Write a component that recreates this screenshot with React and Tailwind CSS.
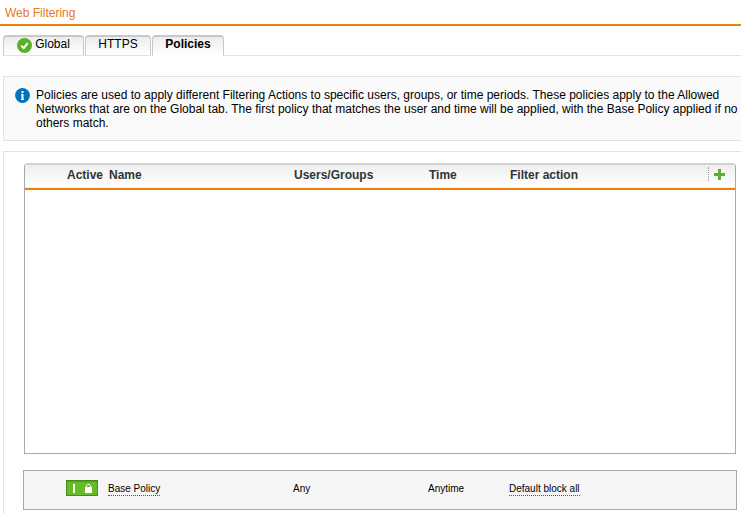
const TABS = [
  { id: 'global', label: 'Global', width: 'w-[81px]', enabled: true },
  { id: 'https', label: 'HTTPS', width: 'w-[66px]' },
  { id: 'policies', label: 'Policies', width: 'w-[72px]', active: true },
];

function CheckIcon() {
  return (
    <svg width="15" height="15" viewBox="0 0 14 14" aria-hidden="true">
      <circle cx="7" cy="7" r="7" fill="#5cb02c" />
      <path d="M4 7.2 6.3 9.4 10 4.8" fill="none" stroke="#fff" strokeWidth="1.8" />
    </svg>
  );
}

function InfoIcon() {
  return (
    <svg className="shrink-0" width="15" height="15" viewBox="0 0 15 15" aria-hidden="true">
      <circle cx="7.5" cy="7.5" r="7.4" fill="#0473bd" />
      <path d="M6.5 3h2v2h-2zM6 6h2.5v5H9v1H6v-1h.5V7H6z" fill="#fff" />
    </svg>
  );
}

function PlusIcon() {
  return (
    <svg width="11" height="11" viewBox="0 0 11 11" aria-hidden="true">
      <path d="M4 0h3v4h4v3H7v4H4V7H0V4h4z" fill="#5cb02c" />
    </svg>
  );
}

function LockedToggle() {
  return (
    <button type="button" aria-label="Base Policy active, locked" className="block h-4 w-8 border border-[#4a8a1c] bg-[#66bb29]">
      <svg width="30" height="14" viewBox="0 0 30 14" aria-hidden="true">
        <path d="M0 .5h30" stroke="#54a01e" />
        <path d="M6 3h2v9H6z" fill="#fff" />
        <path d="M18 6h7v6h-7z" fill="#fff" />
        <path d="M19.5 6.5V4.5l1-1h2l1 1v2" fill="none" stroke="#fff" />
      </svg>
    </button>
  );
}

function Tab({ tab }) {
  return (
    <button
      type="button"
      role="tab"
      aria-selected={!!tab.active}
      className={`flex h-[21px] items-center justify-center gap-[3px] rounded-t-[4px] border border-t-2 border-[#c8c8c8] bg-linear-to-b from-[#ebeeee] to-white pb-1 leading-[14px] ${tab.width} ${tab.active ? 'border-b-white font-bold' : 'border-b-[#e2e2e2]'}`}
    >
      {tab.enabled && <span className="pt-[2px]"><CheckIcon /></span>}
      {tab.label}
    </button>
  );
}

// Both tables share these so the base policy lines up with the header
function PolicyColumns() {
  return (
    <colgroup>
      <col className="w-[42px]" />
      <col className="w-[42px]" />
      <col className="w-[185px]" />
      <col className="w-[135px]" />
      <col className="w-[81px]" />
      <col />
      <col className="w-7" />
    </colgroup>
  );
}

function PolicyLink({ children }) {
  return (
    <a href="#edit" className="block w-fit border-b border-dotted border-[#555] leading-[12px]">{children}</a>
  );
}

export default function App() {
  return (
    <div className="h-screen overflow-hidden bg-white font-['Liberation_Sans',Arial,sans-serif] text-[12px] leading-[14px] text-black">
      <div className="min-w-[760px]">
        <h1 className="border-b-2 border-[#ee8208] px-[5px] pt-[6px] pb-1 text-[#e8781e]">Web Filtering</h1>

        <div role="tablist" className="mt-[9px] ml-[3px] flex gap-px">
          {TABS.map((tab) => <Tab key={tab.id} tab={tab} />)}
          <div className="-ml-px grow border-b border-[#e2e2e2]" />
        </div>

        <main className="mt-5 px-[3px]">
          <div className="flex gap-[6px] border border-[#e2e2e2] bg-[#fafafa] px-[11px] pt-[11px] pb-[10px]">
            <InfoIcon />
            <p>
              Policies are used to apply different Filtering Actions to specific users, groups, or time periods. These
              policies apply to the Allowed Networks that are on the Global tab. The first policy that matches the user
              and time will be applied, with the Base Policy applied if no others match.
            </p>
          </div>

          <section className="mt-[10px] border border-[#e2e2e2] px-[19px] pt-[11px] pb-5">
            <div className="mx-px min-h-[291px] rounded-t-[4px] border border-t-2 border-[#a8a8a8] border-t-[#d2d2d2]">
              <table className="w-full table-fixed text-left text-[#333]">
                <PolicyColumns />
                <thead>
                  <tr className="h-6 border-b-2 border-[#ee8208] bg-linear-to-b from-[#eef0f0] to-white">
                    <th aria-label="Order" />
                    <th className="pb-[3px]">Active</th>
                    <th className="pb-[3px]">Name</th>
                    <th className="pb-[3px]">Users/Groups</th>
                    <th className="pb-[3px]">Time</th>
                    <th className="pb-[3px]">Filter action</th>
                    <th className="pb-[5px] pl-px">
                      <button type="button" aria-label="Add policy" className="flex h-[14px] items-center border-l border-dotted border-[#999] pl-[5px]">
                        <PlusIcon />
                      </button>
                    </th>
                  </tr>
                </thead>
              </table>
            </div>

            <div className="mt-4 border border-[#a8a8a8] bg-[#f6f6f6]">
              <table className="w-full table-fixed text-left text-[10px] leading-[12px]">
                <PolicyColumns />
                <tbody>
                  <tr className="h-[38px]">
                    <td />
                    <td className="pt-[9px] align-top"><LockedToggle /></td>
                    <td className="pb-[2px]"><PolicyLink>Base Policy</PolicyLink></td>
                    <td className="pb-[3px]">Any</td>
                    <td className="pb-[3px]">Anytime</td>
                    <td className="pb-[2px]"><PolicyLink>Default block all</PolicyLink></td>
                    <td />
                  </tr>
                </tbody>
              </table>
            </div>
          </section>
        </main>
      </div>
    </div>
  );
}
